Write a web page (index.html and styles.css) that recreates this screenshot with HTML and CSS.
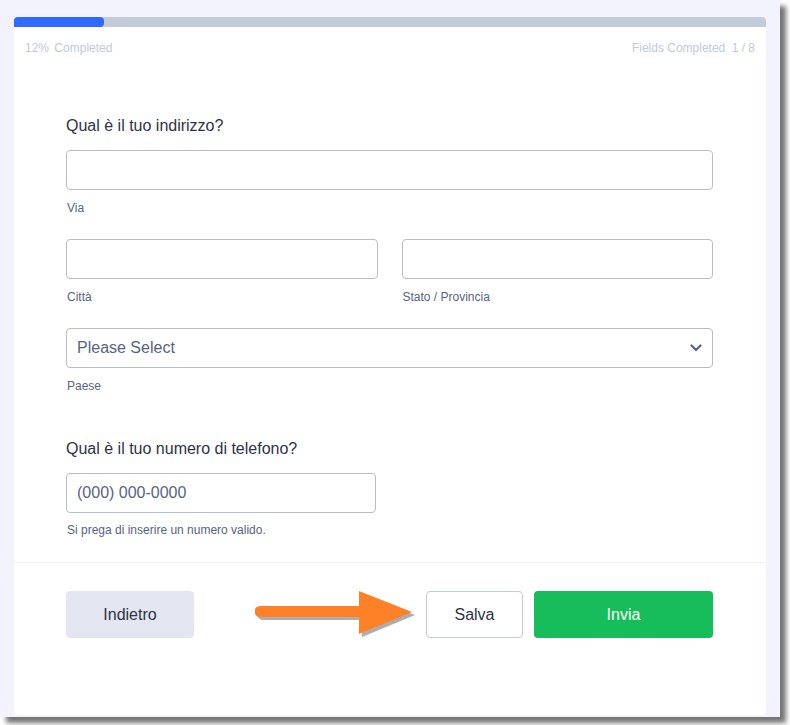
FILE: index.html
```html
<!DOCTYPE html>
<html lang="it">
<head>
    <meta charset="UTF-8">
    <meta name="viewport" content="width=device-width, initial-scale=1.0">
    <title>Indirizzo e telefono</title>
    <link rel="stylesheet" href="styles.css">
</head>
<body>
    <div class="frame">
        <div class="form-card">
            <div class="progress">
                <div class="progress-fill" style="width: 12%"></div>
            </div>
            <div class="progress-status">
                <span><span class="pct">12%</span> Completed</span>
                <span>Fields Completed <span class="count">1 / 8</span></span>
            </div>

            <div class="form-body">
                <div class="question">
                    <h3>Qual è il tuo indirizzo?</h3>
                    <div class="field">
                        <input type="text" class="text-input">
                        <label class="sublabel">Via</label>
                    </div>
                    <div class="field-row">
                        <div class="field">
                            <input type="text" class="text-input">
                            <label class="sublabel">Città</label>
                        </div>
                        <div class="field">
                            <input type="text" class="text-input">
                            <label class="sublabel">Stato / Provincia</label>
                        </div>
                    </div>
                    <div class="field">
                        <div class="select-box">
                            <span>Please Select</span>
                            <svg width="12" height="8" viewBox="0 0 12 8">
                                <path d="M1.5 1.5 L6 6 L10.5 1.5" fill="none" stroke="#57647e" stroke-width="2.2" stroke-linecap="round" stroke-linejoin="round"/>
                            </svg>
                        </div>
                        <label class="sublabel">Paese</label>
                    </div>
                </div>

                <div class="question phone">
                    <h3>Qual è il tuo numero di telefono?</h3>
                    <div class="field narrow">
                        <input type="text" class="text-input" placeholder="(000) 000-0000">
                        <label class="sublabel hint">Si prega di inserire un numero valido.</label>
                    </div>
                </div>
            </div>

            <div class="form-footer">
                <button class="btn btn-back">Indietro</button>
                <div class="footer-right">
                    <button class="btn btn-save">Salva</button>
                    <button class="btn btn-submit">Invia</button>
                </div>
                <!-- callout arrow pointing at Salva -->
                <svg class="callout-arrow" width="170" height="56" viewBox="0 0 170 56">
                    <g transform="translate(3,3)" fill="#8a8a8a" opacity="0.7">
                        <path d="M5 16 H104 V1 L157 22 L104 44 V27 H5 A5.5 5.5 0 0 1 5 16 Z"/>
                    </g>
                    <path d="M5 16 H104 V1 L157 22 L104 44 V27 H5 A5.5 5.5 0 0 1 5 16 Z" fill="#fe8128"/>
                </svg>
            </div>
        </div>
    </div>
</body>
</html>
```

FILE: styles.css
```css
body {
    margin: 0;
    width: 790px;
    height: 725px;
    background: #ffffff;
    font-family: "Liberation Sans", Arial, sans-serif;
    overflow: hidden;
}

.frame {
    width: 780px;
    height: 717px;
    box-sizing: border-box;
    padding: 17px 14px 2px;
    background: #f3f3fd;
    box-shadow: 6px 6px 5px rgba(0, 0, 0, 0.55);
}

.form-card {
    position: relative;
    height: 100%;
    background: #fff;
    border-radius: 4px;
}

.progress {
    height: 10px;
    background: #c3cad8;
    border-radius: 4px 4px 0 0;
    overflow: hidden;
}

.progress-fill {
    height: 100%;
    background: #3069fe;
    border-radius: 0 4px 4px 0;
}

.progress-status {
    display: flex;
    justify-content: space-between;
    padding: 14px 11px 0;
    font-size: 12px;
    line-height: 14px;
    color: #c3c8da;
}

.pct {
    margin-right: 2px;
}

.count {
    margin-left: 3px;
}

.form-body {
    padding: 61px 53px 0 52px;
}

.question h3 {
    margin: 0 0 14px;
    font-size: 16px;
    line-height: 20px;
    font-weight: normal;
    color: #2c3345;
}

.question.phone {
    margin-top: 45px;
}

.field {
    display: flex;
    flex-direction: column;
    margin-bottom: 23px;
}

.field.narrow {
    width: 310px;
    margin-bottom: 0;
}

.field-row {
    display: flex;
    gap: 24px;
}

.field-row .field {
    flex: 1;
}

.text-input {
    box-sizing: border-box;
    height: 40px;
    padding: 0 10px;
    border: 1px solid #b8bdc9;
    border-radius: 4px;
    font-family: inherit;
    font-size: 16px;
    color: #2c3345;
    background: #fff;
}

.text-input::placeholder {
    color: #57647e;
}

.select-box {
    box-sizing: border-box;
    height: 40px;
    padding: 0 10px;
    border: 1px solid #b8bdc9;
    border-radius: 4px;
    display: flex;
    justify-content: space-between;
    align-items: center;
    font-size: 16px;
    color: #57647e;
}

.sublabel {
    margin-top: 10px;
    padding-left: 1px;
    font-size: 12px;
    line-height: 16px;
    color: #57647e;
}

.sublabel.hint {
    margin-top: 9px;
    line-height: 16px;
}

.form-footer {
    position: relative;
    display: flex;
    justify-content: space-between;
    margin-top: 24px;
    padding: 28px 53px 0 52px;
    border-top: 1px solid #f1f1f8;
}

.footer-right {
    display: flex;
    gap: 11px;
}

.btn {
    height: 47px;
    border-radius: 4px;
    font-family: inherit;
    font-size: 16px;
    cursor: pointer;
}

.btn-back {
    width: 128px;
    border: 1px solid #e3e5f1;
    background: #e3e5f1;
    color: #2c3345;
}

.btn-save {
    width: 97px;
    border: 1px solid #c3cad8;
    background: #fff;
    color: #2c3345;
}

.btn-submit {
    width: 179px;
    border: none;
    background: #18bd5b;
    color: #fff;
}

.callout-arrow {
    position: absolute;
    left: 241px;
    top: 27px;
}
```
